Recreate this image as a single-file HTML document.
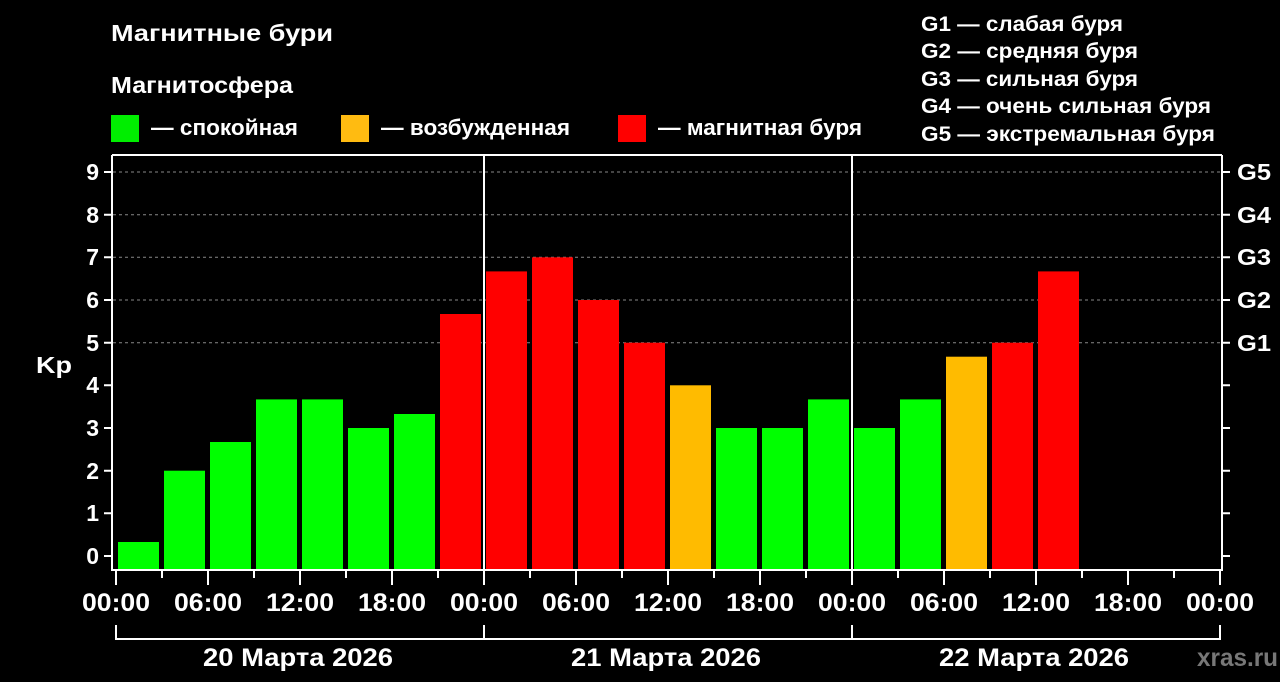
<!DOCTYPE html>
<html><head><meta charset="utf-8"><style>
html,body{margin:0;padding:0;background:#000;}
svg{display:block;font-family:"Liberation Sans",Arial,sans-serif;font-weight:bold;}
</style></head><body>
<svg width="1280" height="682" viewBox="0 0 1280 682" xmlns="http://www.w3.org/2000/svg">
<rect width="1280" height="682" fill="#000"/>
<g fill="#fff" font-size="23" lengthAdjust="spacingAndGlyphs">
<text x="111" y="41" textLength="222" lengthAdjust="spacingAndGlyphs">Магнитные бури</text>
<text x="111" y="93" textLength="182" lengthAdjust="spacingAndGlyphs">Магнитосфера</text>
<text x="151" y="135" font-size="22" textLength="147" lengthAdjust="spacingAndGlyphs">— спокойная</text>
<text x="381" y="135" font-size="22" textLength="189" lengthAdjust="spacingAndGlyphs">— возбужденная</text>
<text x="658" y="135" font-size="22" textLength="204" lengthAdjust="spacingAndGlyphs">— магнитная буря</text>
</g>
<rect x="111" y="115" width="28" height="27" fill="#00ee00"/>
<rect x="341" y="115" width="28" height="27" fill="#ffbb11"/>
<rect x="618" y="115" width="28" height="27" fill="#ff0000"/>
<g fill="#fff" font-size="21.5">
<text x="921" y="31" textLength="202" lengthAdjust="spacingAndGlyphs">G1 — слабая буря</text>
<text x="921" y="58" textLength="217" lengthAdjust="spacingAndGlyphs">G2 — средняя буря</text>
<text x="921" y="86" textLength="217" lengthAdjust="spacingAndGlyphs">G3 — сильная буря</text>
<text x="921" y="113" textLength="290" lengthAdjust="spacingAndGlyphs">G4 — очень сильная буря</text>
<text x="921" y="141" textLength="294" lengthAdjust="spacingAndGlyphs">G5 — экстремальная буря</text>
</g>
<g stroke="#888" stroke-width="1" stroke-dasharray="3,3">
<line x1="113" x2="1221" y1="172" y2="172"/>
<line x1="113" x2="1221" y1="214.7" y2="214.7"/>
<line x1="113" x2="1221" y1="257.3" y2="257.3"/>
<line x1="113" x2="1221" y1="300" y2="300"/>
<line x1="113" x2="1221" y1="342.7" y2="342.7"/>
</g>
<g fill="#00ff00">
<rect x="118" y="542" width="41" height="27"/>
<rect x="164" y="470.7" width="41" height="98.3"/>
<rect x="210" y="442" width="41" height="127"/>
<rect x="256" y="399.4" width="41" height="169.6"/>
<rect x="302" y="399.4" width="41" height="169.6"/>
<rect x="348" y="428" width="41" height="141"/>
<rect x="394" y="414" width="41" height="155"/>
<rect x="716" y="428" width="41" height="141"/>
<rect x="762" y="428" width="41" height="141"/>
<rect x="808" y="399.4" width="41" height="169.6"/>
<rect x="854" y="428" width="41" height="141"/>
<rect x="900" y="399.4" width="41" height="169.6"/>
</g>
<g fill="#ffbb00">
<rect x="670" y="385.3" width="41" height="183.7"/>
<rect x="946" y="356.7" width="41" height="212.3"/>
</g>
<g fill="#ff0000">
<rect x="440" y="314" width="41" height="255"/>
<rect x="486" y="271.4" width="41" height="297.6"/>
<rect x="532" y="257.3" width="41" height="311.7"/>
<rect x="578" y="300" width="41" height="269"/>
<rect x="624" y="342.7" width="41" height="226.3"/>
<rect x="992" y="342.7" width="41" height="226.3"/>
<rect x="1038" y="271.4" width="41" height="297.6"/>
</g>
<g stroke="#fff" stroke-width="2" fill="none">
<line x1="112" y1="155" x2="1222" y2="155"/>
<line x1="112" y1="155" x2="112" y2="570"/>
<line x1="1222" y1="155" x2="1222" y2="570"/>
<line x1="111" y1="570" x2="1223" y2="570"/>
<line x1="484" y1="155" x2="484" y2="570"/>
<line x1="852" y1="155" x2="852" y2="570"/>
</g>
<g stroke="#fff" stroke-width="2" fill="none">
<path d="M104 172H112M104 214.7H112M104 257.3H112M104 300H112M104 342.7H112M104 385.3H112M104 428H112M104 470.7H112M104 513.3H112M104 556H112"/>
<path d="M1222 172H1230M1222 214.7H1230M1222 257.3H1230M1222 300H1230M1222 342.7H1230M1222 385.3H1230M1222 428H1230M1222 470.7H1230M1222 513.3H1230M1222 556H1230"/>
<path d="M116 570V585M208 570V585M300 570V585M392 570V585M484 570V585M576 570V585M668 570V585M760 570V585M852 570V585M944 570V585M1036 570V585M1128 570V585M1220 570V585"/>
<path d="M162 570V578M254 570V578M346 570V578M438 570V578M530 570V578M622 570V578M714 570V578M806 570V578M898 570V578M990 570V578M1082 570V578M1174 570V578"/>
<path d="M116 625V639H1220V625M484 625V639M852 625V639"/>
</g>
<g fill="#fff" font-size="23" text-anchor="end">
<text x="99" y="180">9</text><text x="99" y="223">8</text><text x="99" y="265">7</text>
<text x="99" y="308">6</text><text x="99" y="351">5</text><text x="99" y="393">4</text>
<text x="99" y="436">3</text><text x="99" y="479">2</text><text x="99" y="521">1</text>
<text x="99" y="564">0</text>
</g>
<text x="36" y="373" fill="#fff" font-size="23" textLength="36" lengthAdjust="spacingAndGlyphs">Kp</text>
<g fill="#fff" font-size="23">
<text x="1237" y="180" textLength="34" lengthAdjust="spacingAndGlyphs">G5</text>
<text x="1237" y="223" textLength="34" lengthAdjust="spacingAndGlyphs">G4</text>
<text x="1237" y="265" textLength="34" lengthAdjust="spacingAndGlyphs">G3</text>
<text x="1237" y="308" textLength="34" lengthAdjust="spacingAndGlyphs">G2</text>
<text x="1237" y="351" textLength="34" lengthAdjust="spacingAndGlyphs">G1</text>
</g>
<g fill="#fff" font-size="25">
<text x="82" y="611" textLength="68" lengthAdjust="spacingAndGlyphs">00:00</text>
<text x="174" y="611" textLength="68" lengthAdjust="spacingAndGlyphs">06:00</text>
<text x="266" y="611" textLength="68" lengthAdjust="spacingAndGlyphs">12:00</text>
<text x="358" y="611" textLength="68" lengthAdjust="spacingAndGlyphs">18:00</text>
<text x="450" y="611" textLength="68" lengthAdjust="spacingAndGlyphs">00:00</text>
<text x="542" y="611" textLength="68" lengthAdjust="spacingAndGlyphs">06:00</text>
<text x="634" y="611" textLength="68" lengthAdjust="spacingAndGlyphs">12:00</text>
<text x="726" y="611" textLength="68" lengthAdjust="spacingAndGlyphs">18:00</text>
<text x="818" y="611" textLength="68" lengthAdjust="spacingAndGlyphs">00:00</text>
<text x="910" y="611" textLength="68" lengthAdjust="spacingAndGlyphs">06:00</text>
<text x="1002" y="611" textLength="68" lengthAdjust="spacingAndGlyphs">12:00</text>
<text x="1094" y="611" textLength="68" lengthAdjust="spacingAndGlyphs">18:00</text>
<text x="1186" y="611" textLength="68" lengthAdjust="spacingAndGlyphs">00:00</text>
<text x="203" y="666" textLength="190" lengthAdjust="spacingAndGlyphs">20 Марта 2026</text>
<text x="571" y="666" textLength="190" lengthAdjust="spacingAndGlyphs">21 Марта 2026</text>
<text x="939" y="666" textLength="190" lengthAdjust="spacingAndGlyphs">22 Марта 2026</text>
</g>
<text x="1197" y="666" fill="#777" font-size="25" textLength="81" lengthAdjust="spacingAndGlyphs">xras.ru</text>
</svg>
</body></html>
